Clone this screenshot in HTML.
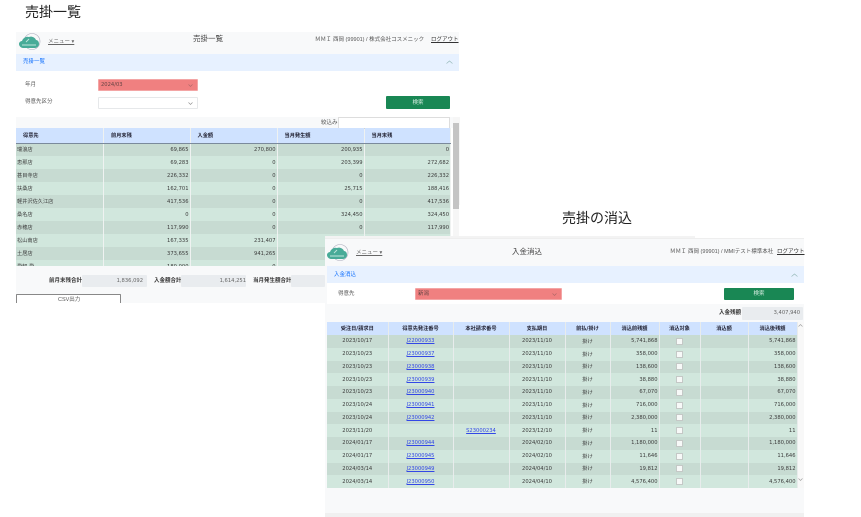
<!DOCTYPE html>
<html lang="ja">
<head>
<meta charset="utf-8">
<title>売掛一覧</title>
<style>
html,body{margin:0;padding:0;background:#fff}
body{width:861px;height:517px;position:relative;overflow:hidden;font-family:"Liberation Sans","Noto Sans CJK JP",sans-serif;color:#333}
.a{position:absolute;white-space:nowrap;box-sizing:border-box}
.t{font-size:5.5px;line-height:8px}
.soft{filter:blur(.3px)}
table{border-collapse:collapse;table-layout:fixed;position:absolute;font-family:"DejaVu Sans","Noto Sans CJK JP",sans-serif;font-size:5.2px;color:#3c3c3c;filter:blur(.3px)}
td,th{padding:0 1px;overflow:hidden;white-space:nowrap;box-sizing:border-box;border-right:1px solid rgba(100,130,120,.1)}
th{background:#cfe2ff;font-weight:700;color:#223}
tr:nth-child(odd) td{background:#c7dbd2}
tr:nth-child(even) td{background:#d1e7dd}
.r{text-align:right}
.c{text-align:center}
#L th{height:15px;text-align:left;padding-left:7px;border-bottom:1.5px solid #7b8a9c}
#L td{height:13px}
#R th{height:13px;text-align:center}
#R td{height:12.75px}
a{color:#3348e6;text-decoration:underline}
.cb{display:inline-block;width:5px;height:5px;background:#f7f9f8;border:.5px solid #c4c8c6;vertical-align:middle}
.sel{border-radius:1px;border:.5px solid #e6e8ea}
.fld{background:#e9ecef;text-align:right;color:#666;font-family:"DejaVu Sans",sans-serif;font-size:5.2px;padding-right:4px;border-radius:1px}
.btn{background:#198754;color:#d8efe3;text-align:center;font-size:5.5px;border-radius:1px}
svg.ic{position:absolute;overflow:visible}
</style>
</head>
<body>
<div class="a" style="left:25px;top:3px;font-size:14px;line-height:18px;color:#222">売掛一覧</div>

<!-- left window -->
<div class="a" style="left:16px;top:32px;width:443px;height:22px;background:#f8f9fa"></div>
<svg class="a soft" style="left:18px;top:33px" width="24" height="18" viewBox="0 0 24 18"><circle cx="14" cy="8.5" r="8" fill="none" stroke="#aab" stroke-width=".6"/><path d="M1 11c0-2 2-3 3-3 1-3 4-5 7-4 2-1 6 0 7 3 2 0 3 2 3 4s-2 4-4 4H5c-2 0-4-2-4-4z" fill="#48ab98"/><path d="M4 12h14M8 9l3-3" stroke="#bfe5dc" stroke-width=".9" fill="none"/></svg>
<div class="a t soft" style="left:48px;top:38px;color:#666;text-decoration:underline">メニュー ▾</div>
<div class="a soft" style="left:193px;top:33px;font-size:7.5px;line-height:11px;color:#444">売掛一覧</div>
<div class="a t soft" style="left:315px;top:36px;color:#555">ＭＭＩ 西岡 (99901) / 株式会社コスメニック</div>
<div class="a t soft" style="left:431px;top:36px;color:#333;text-decoration:underline">ログアウト</div>

<div class="a" style="left:16px;top:54px;width:443px;height:17px;background:#e7f1ff"></div>
<div class="a t soft" style="left:23px;top:58px;color:#0d6efd">売掛一覧</div>
<svg class="ic" style="left:446px;top:60px" width="7" height="4"><path d="M.5 3.5 3.5 1 6.5 3.5" fill="none" stroke="#9bb" stroke-width=".7"/></svg>
<div class="a" style="left:16px;top:71px;width:443px;height:46px;background:#fff"></div>
<div class="a t soft" style="left:25px;top:81px;color:#555">年月</div>
<div class="a t soft" style="left:25px;top:98px;color:#555">得意先区分</div>
<div class="a sel" style="left:98px;top:79px;width:100px;height:12px;background:#f08080;border-color:#f3a5a5"></div>
<div class="a t soft" style="left:101px;top:81px;color:#644;font-family:'DejaVu Sans',sans-serif;font-size:5.2px">2024/03</div>
<svg class="ic" style="left:188px;top:84px" width="5" height="3"><path d="M.5.5 2.5 2.5 4.500 .5" fill="none" stroke="#a66" stroke-width=".6"/></svg>
<div class="a sel" style="left:98px;top:97px;width:100px;height:12px;background:#fff"></div>
<svg class="ic" style="left:188px;top:102px" width="5" height="3"><path d="M.5.5 2.5 2.5 4.500 .5" fill="none" stroke="#888" stroke-width=".6"/></svg>
<div class="a btn" style="left:386px;top:96px;width:64px;height:13px;line-height:14px">検索</div>
<div class="a" style="left:16px;top:117px;width:443px;height:11px;background:#f8f9fa"></div>
<div class="a t soft" style="left:321px;top:119px;color:#555">絞込み</div>
<div class="a" style="left:338px;top:117px;width:112px;height:12px;background:#fff;border:.5px solid #ddd"></div>

<div class="a" style="left:16px;top:128px;width:435px;height:138px;overflow:hidden">
<table id="L" style="left:0;top:0;width:434.5px">
<colgroup><col style="width:87.5px"><col style="width:86.5px"><col style="width:87px"><col style="width:87px"><col style="width:86.5px"></colgroup>
<thead><tr><th>得意先</th><th>前月末残</th><th>入金額</th><th>当月発生額</th><th>当月末残</th></tr></thead>
<tbody>
<tr><td>瑞浪店</td><td class="r">69,865</td><td class="r">270,800</td><td class="r">200,935</td><td class="r">0</td></tr>
<tr><td>恵那店</td><td class="r">69,283</td><td class="r">0</td><td class="r">203,399</td><td class="r">272,682</td></tr>
<tr><td>甚目寺店</td><td class="r">226,332</td><td class="r">0</td><td class="r">0</td><td class="r">226,332</td></tr>
<tr><td>扶桑店</td><td class="r">162,701</td><td class="r">0</td><td class="r">25,715</td><td class="r">188,416</td></tr>
<tr><td>軽井沢佐久江店</td><td class="r">417,536</td><td class="r">0</td><td class="r">0</td><td class="r">417,536</td></tr>
<tr><td>桑名店</td><td class="r">0</td><td class="r">0</td><td class="r">324,450</td><td class="r">324,450</td></tr>
<tr><td>赤穂店</td><td class="r">117,990</td><td class="r">0</td><td class="r">0</td><td class="r">117,990</td></tr>
<tr><td>松山南店</td><td class="r">167,335</td><td class="r">231,407</td><td class="r">64,072</td><td class="r">0</td></tr>
<tr><td>土居店</td><td class="r">373,655</td><td class="r">941,265</td><td class="r">567,610</td><td class="r">0</td></tr>
<tr><td>愛知 愛</td><td class="r">180,000</td><td class="r">0</td><td class="r">0</td><td class="r">180,000</td></tr>
</tbody>
</table>
</div>
<div class="a" style="left:453px;top:117px;width:7px;height:149px;background:#f6f6f6"></div>
<div class="a" style="left:453px;top:123px;width:6px;height:86px;background:#c4c4c4"></div>
<div class="a" style="left:16px;top:266px;width:443px;height:37px;background:#f8f9fa"></div>
<div class="a t soft" style="left:49px;top:277px;font-weight:700">前月末残合計</div>
<div class="a fld soft" style="left:82px;top:275px;width:65px;height:12px;line-height:12px">1,836,092</div>
<div class="a t soft" style="left:154px;top:277px;font-weight:700">入金額合計</div>
<div class="a fld soft" style="left:181px;top:275px;width:65px;height:12px;line-height:12px;padding-right:0">1,614,251</div>
<div class="a t soft" style="left:253px;top:277px;font-weight:700">当月発生額合計</div>
<div class="a fld" style="left:291px;top:275px;width:34px;height:12px"></div>
<div class="a" style="left:16px;top:294px;width:105px;height:10px;background:#fff;border:.7px solid #888;border-bottom:0;border-radius:1px 1px 0 0"></div>
<div class="a t soft" style="left:58px;top:296px;color:#555">CSV出力</div>
<div class="a" style="left:0;top:303px;width:325px;height:214px;background:#fff"></div>

<!-- right window -->
<div class="a" style="left:459px;top:205px;width:102px;height:33px;background:#fff"></div>
<div class="a" style="left:325px;top:236px;width:370px;height:2px;background:#f3f3f3"></div>
<div class="a" style="left:325px;top:238px;width:479px;height:279px;background:#f8f9fa"></div>
<div class="a" style="left:325px;top:238px;width:479px;height:1px;background:#eee"></div>
<div class="a" style="left:562px;top:209px;font-size:14px;line-height:18px;color:#222">売掛の消込</div>
<svg class="a soft" style="left:326px;top:244px" width="24" height="18" viewBox="0 0 24 18"><circle cx="14" cy="8.500" r="8" fill="none" stroke="#aab" stroke-width=".6"/><path d="M1 11c0-2 2-3 3-3 1-3 4-5 7-4 2-1 6 0 7 3 2 0 3 2 3 4s-2 4-4 4H5c-2 0-4-2-4-4z" fill="#48ab98"/><path d="M4 12h14M8 9l3-3" stroke="#bfe5dc" stroke-width=".9" fill="none"/></svg>
<div class="a t soft" style="left:356px;top:249px;color:#666;text-decoration:underline">メニュー ▾</div>
<div class="a soft" style="left:512px;top:246px;font-size:7.5px;line-height:11px;color:#444">入金消込</div>
<div class="a t soft" style="left:670px;top:248px;color:#555">ＭＭＩ 西岡 (99901) / MMIテスト標準本社</div>
<div class="a t soft" style="left:777px;top:248px;color:#333;text-decoration:underline">ログアウト</div>
<div class="a" style="left:327px;top:266px;width:477px;height:17px;background:#e7f1ff"></div>
<div class="a t soft" style="left:334px;top:271px;color:#0d6efd">入金消込</div>
<svg class="ic" style="left:791px;top:273px" width="7" height="4"><path d="M.5 3.5 3.5 1 6.5 3.5" fill="none" stroke="#9bb" stroke-width=".7"/></svg>
<div class="a" style="left:327px;top:283px;width:477px;height:21px;background:#fff"></div>
<div class="a t soft" style="left:338px;top:290px;color:#555">得意先</div>
<div class="a sel" style="left:415px;top:288px;width:147px;height:12px;background:#f08080;border-color:#f3a5a5"></div>
<div class="a t soft" style="left:418px;top:290px;color:#644">新潟</div>
<svg class="ic" style="left:552px;top:293px" width="5" height="3"><path d="M.5.5 2.5 2.5 4.500 .5" fill="none" stroke="#a66" stroke-width=".6"/></svg>
<div class="a btn" style="left:724px;top:288px;width:70px;height:12px;line-height:13px">検索</div>
<div class="a t soft" style="left:719px;top:309px;font-weight:700">入金残額</div>
<div class="a fld soft" style="left:742px;top:307px;width:61px;height:13px;line-height:13px;padding-right:3px">3,407,940</div>

<table id="R" style="left:327px;top:322px;width:470px">
<colgroup><col style="width:61px"><col style="width:65px"><col style="width:56px"><col style="width:56px"><col style="width:45px"><col style="width:49px"><col style="width:41px"><col style="width:48px"><col style="width:49px"></colgroup>
<thead><tr><th>受注日/請求日</th><th>得意先発注番号</th><th>本社請求番号</th><th>支払期日</th><th>前払/掛け</th><th>消込前残額</th><th>消込対象</th><th>消込額</th><th>消込後残額</th></tr></thead>
<tbody>
<tr><td class="c">2023/10/17</td><td class="c"><a>J22000933</a></td><td></td><td class="c">2023/11/10</td><td class="c">掛け</td><td class="r">5,741,868</td><td class="c"><span class="cb"></span></td><td></td><td class="r">5,741,868</td></tr>
<tr><td class="c">2023/10/23</td><td class="c"><a>J23000937</a></td><td></td><td class="c">2023/11/10</td><td class="c">掛け</td><td class="r">358,000</td><td class="c"><span class="cb"></span></td><td></td><td class="r">358,000</td></tr>
<tr><td class="c">2023/10/23</td><td class="c"><a>J23000938</a></td><td></td><td class="c">2023/11/10</td><td class="c">掛け</td><td class="r">138,600</td><td class="c"><span class="cb"></span></td><td></td><td class="r">138,600</td></tr>
<tr><td class="c">2023/10/23</td><td class="c"><a>J23000939</a></td><td></td><td class="c">2023/11/10</td><td class="c">掛け</td><td class="r">38,880</td><td class="c"><span class="cb"></span></td><td></td><td class="r">38,880</td></tr>
<tr><td class="c">2023/10/23</td><td class="c"><a>J23000940</a></td><td></td><td class="c">2023/11/10</td><td class="c">掛け</td><td class="r">67,070</td><td class="c"><span class="cb"></span></td><td></td><td class="r">67,070</td></tr>
<tr><td class="c">2023/10/24</td><td class="c"><a>J23000941</a></td><td></td><td class="c">2023/11/10</td><td class="c">掛け</td><td class="r">716,000</td><td class="c"><span class="cb"></span></td><td></td><td class="r">716,000</td></tr>
<tr><td class="c">2023/10/24</td><td class="c"><a>J23000942</a></td><td></td><td class="c">2023/11/10</td><td class="c">掛け</td><td class="r">2,380,000</td><td class="c"><span class="cb"></span></td><td></td><td class="r">2,380,000</td></tr>
<tr><td class="c">2023/11/20</td><td></td><td class="c"><a>S23000234</a></td><td class="c">2023/12/10</td><td class="c">掛け</td><td class="r">11</td><td class="c"><span class="cb"></span></td><td></td><td class="r">11</td></tr>
<tr><td class="c">2024/01/17</td><td class="c"><a>J23000944</a></td><td></td><td class="c">2024/02/10</td><td class="c">掛け</td><td class="r">1,180,000</td><td class="c"><span class="cb"></span></td><td></td><td class="r">1,180,000</td></tr>
<tr><td class="c">2024/01/17</td><td class="c"><a>J23000945</a></td><td></td><td class="c">2024/02/10</td><td class="c">掛け</td><td class="r">11,646</td><td class="c"><span class="cb"></span></td><td></td><td class="r">11,646</td></tr>
<tr><td class="c">2024/03/14</td><td class="c"><a>J23000949</a></td><td></td><td class="c">2024/04/10</td><td class="c">掛け</td><td class="r">19,812</td><td class="c"><span class="cb"></span></td><td></td><td class="r">19,812</td></tr>
<tr><td class="c">2024/03/14</td><td class="c"><a>J23000950</a></td><td></td><td class="c">2024/04/10</td><td class="c">掛け</td><td class="r">4,576,400</td><td class="c"><span class="cb"></span></td><td></td><td class="r">4,576,400</td></tr>
</tbody>
</table>
<div class="a" style="left:798px;top:322px;width:6px;height:166px;background:#f8f8f8"></div>
<svg class="ic" style="left:798px;top:324px" width="5" height="3"><path d="M.5 2.500 2.500 .5 4.500 2.500" fill="none" stroke="#999" stroke-width=".6"/></svg>
<svg class="ic" style="left:798px;top:478px" width="5" height="3"><path d="M.5 .5 2.500 2.500 4.500 .5" fill="none" stroke="#999" stroke-width=".6"/></svg>
<div class="a" style="left:325px;top:513px;width:479px;height:4px;background:#f0f0f0"></div>
</body>
</html>
